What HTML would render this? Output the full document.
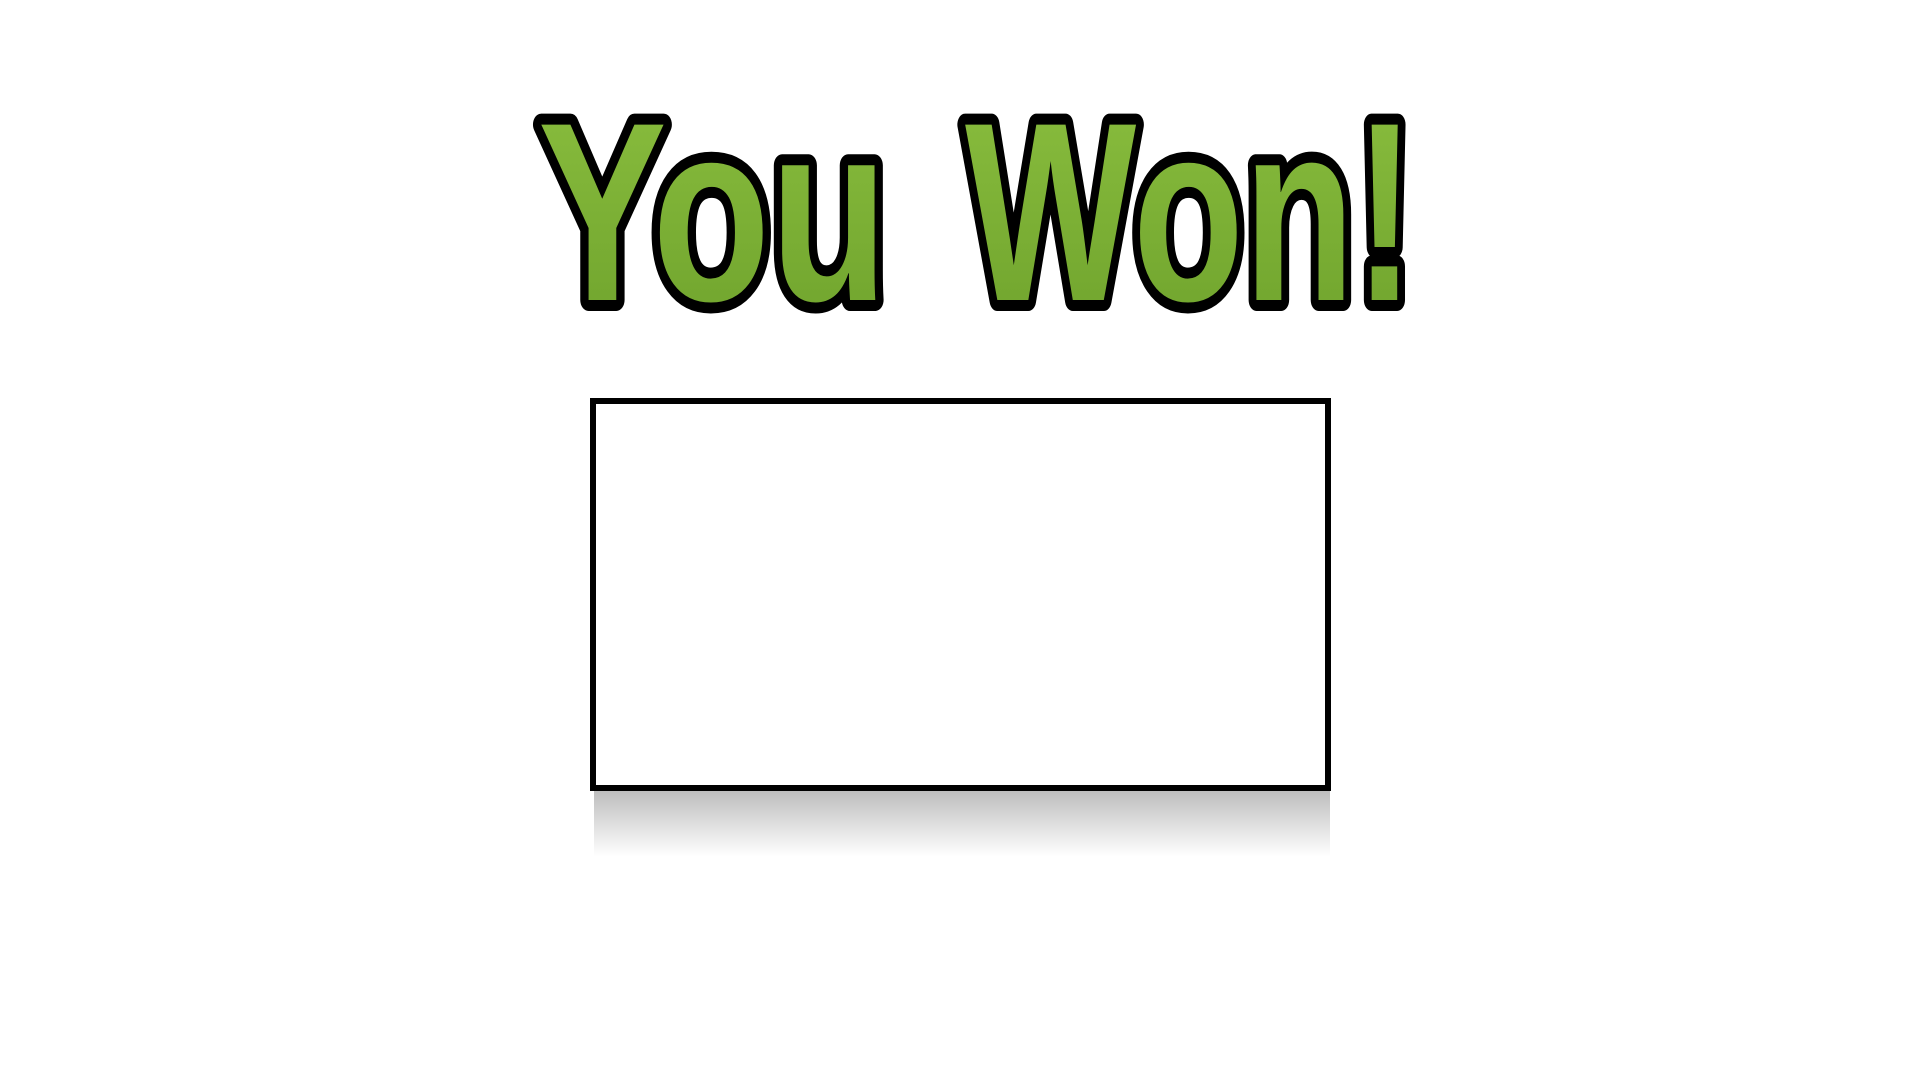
<!DOCTYPE html>
<html><head><style>
html,body{margin:0;padding:0;background:#fff;width:1920px;height:1080px;overflow:hidden}
.box{position:absolute;left:590px;top:398px;width:729px;height:381px;border:6px solid #000;background:#fff;box-sizing:content-box}
.sh{position:absolute;left:594px;top:791px;width:736px;height:66px;background:linear-gradient(#bdbdbd,rgba(255,255,255,0))}
svg{position:absolute;left:0;top:0}
</style></head><body>
<div class="sh"></div>
<div class="box"></div>
<svg width="1920" height="400" viewBox="0 0 1920 400">
<defs><linearGradient id="g" x1="0" y1="0" x2="0" y2="1"><stop offset="0" stop-color="#8bbf3f"/><stop offset="1" stop-color="#6ea22c"/></linearGradient></defs>
<text x="538" y="300" font-family="Liberation Sans, sans-serif" font-weight="bold" font-size="255" textLength="350" lengthAdjust="spacingAndGlyphs" fill="url(#g)" stroke="#000" stroke-width="22" stroke-linejoin="round" paint-order="stroke">You</text>
<text x="965" y="300" font-family="Liberation Sans, sans-serif" font-weight="bold" font-size="255" textLength="450" lengthAdjust="spacingAndGlyphs" fill="url(#g)" stroke="#000" stroke-width="22" stroke-linejoin="round" paint-order="stroke">Won!</text>
</svg>
</body></html>
